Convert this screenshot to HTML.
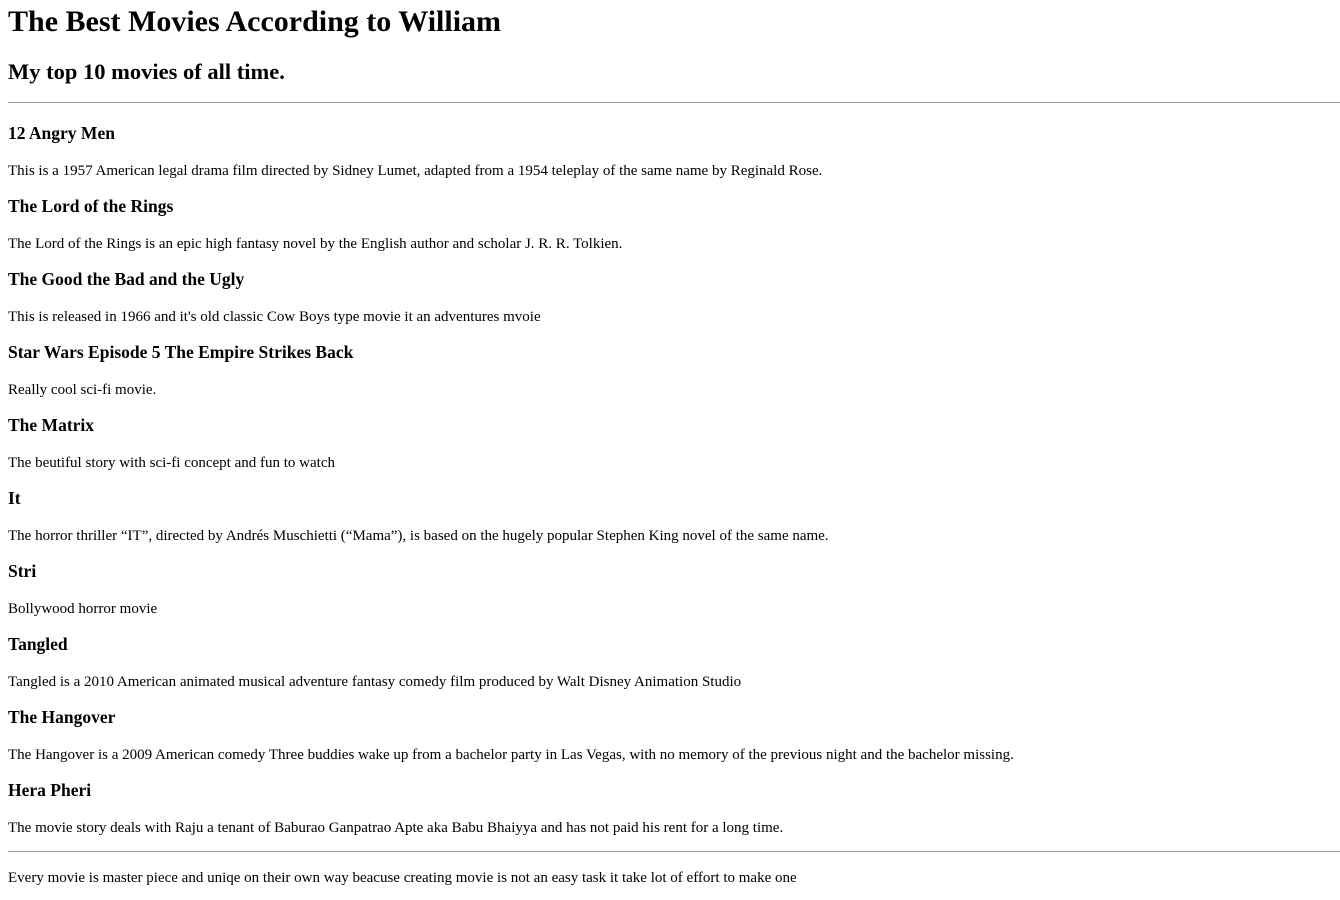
<!DOCTYPE html>
<html><head><meta charset="utf-8"><style>
body{margin:0;font-family:"Liberation Serif",serif;color:#000;background:#fff;width:1340px;height:900px;position:relative;overflow:hidden}
.a{position:absolute;left:8px;margin:0;white-space:nowrap}
h1{font-size:30px;line-height:34px;top:5px}
h2{font-size:22.5px;line-height:26px;top:59px}
hr{position:absolute;left:8px;width:1332px;margin:0;border:0;border-top:1px solid #9a9a9a;height:0}
#list{position:absolute;left:8px;top:123px}
h3{font-size:17.5px;line-height:20px;margin:0 0 19.5px}
p{font-size:15px;line-height:17px;margin:0 0 16.5px;white-space:nowrap}
.f{font-size:15px;line-height:17px;top:870px}
</style></head><body>
<h1 class="a">The Best Movies According to William</h1>
<h2 class="a">My top 10 movies of all time.</h2>
<hr style="top:102px">
<div id="list">
<h3>12 Angry Men</h3><p>This is a 1957 American legal drama film directed by Sidney Lumet, adapted from a 1954 teleplay of the same name by Reginald Rose.</p>
<h3>The Lord of the Rings</h3><p>The Lord of the Rings is an epic high fantasy novel by the English author and scholar J. R. R. Tolkien.</p>
<h3>The Good the Bad and the Ugly</h3><p>This is released in 1966 and it's old classic Cow Boys type movie it an adventures mvoie</p>
<h3>Star Wars Episode 5 The Empire Strikes Back</h3><p>Really cool sci-fi movie.</p>
<h3>The Matrix</h3><p>The beutiful story with sci-fi concept and fun to watch</p>
<h3>It</h3><p>The horror thriller “IT”, directed by Andrés Muschietti (“Mama”), is based on the hugely popular Stephen King novel of the same name.</p>
<h3>Stri</h3><p>Bollywood horror movie</p>
<h3>Tangled</h3><p>Tangled is a 2010 American animated musical adventure fantasy comedy film produced by Walt Disney Animation Studio</p>
<h3>The Hangover</h3><p>The Hangover is a 2009 American comedy Three buddies wake up from a bachelor party in Las Vegas, with no memory of the previous night and the bachelor missing.</p>
<h3>Hera Pheri</h3><p>The movie story deals with Raju a tenant of Baburao Ganpatrao Apte aka Babu Bhaiyya and has not paid his rent for a long time.</p>
</div>
<hr style="top:851px">
<p class="a f">Every movie is master piece and uniqe on their own way beacuse creating movie is not an easy task it take lot of effort to make one</p>
</body></html>
